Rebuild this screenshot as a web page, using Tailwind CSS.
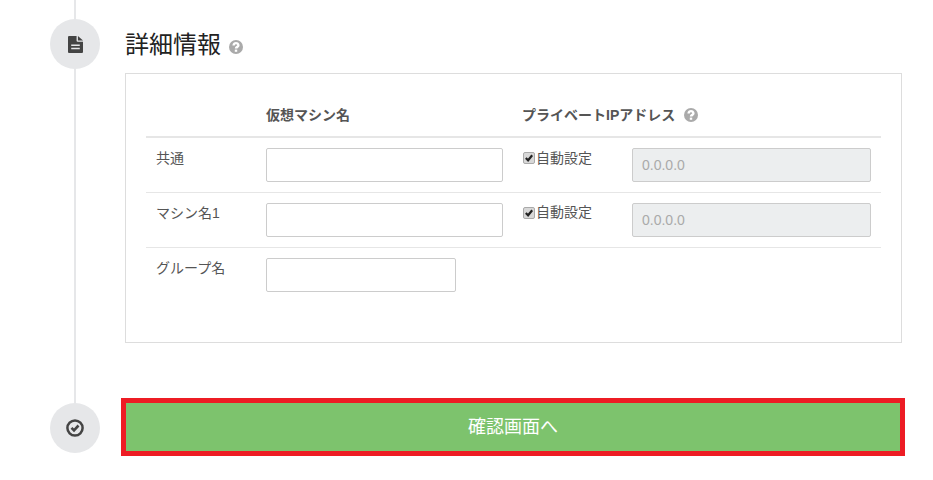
<!DOCTYPE html>
<html lang="ja">
  <head>
    <meta charset="UTF-8" />
    <title>詳細情報</title>
    <script src="https://cdn.jsdelivr.net/npm/@tailwindcss/browser@4"></script>
  </head>
  <body class="bg-white text-[14px] text-[#555] font-['Liberation_Sans','Noto_Sans_CJK_JP',sans-serif] overflow-hidden">
    <div class="relative w-[933px] h-[480px] pl-[50px] pt-[19px]">
      <!-- Timeline line -->
      <div class="absolute left-[74px] top-0 w-[2px] h-[404px] bg-[#e6e7e9]"></div>

      <!-- 詳細情報 -->
      <section class="relative flex">
        <div class="w-[50px] h-[50px] rounded-full bg-[#e6e7e9] flex items-center justify-center shrink-0">
          <svg width="15" height="17" viewBox="0 0 14 16" preserveAspectRatio="none">
            <path fill="#444" d="M0 1a1 1 0 0 1 1-1h7v4.500a1 1 0 0 0 1 1h5V15a1 1 0 0 1-1 1H1a1 1 0 0 1-1-1z" />
            <path fill="#444" d="M9.300 0 14 4.300H9.300z" />
            <path fill="#e6e7e9" d="M3 8h8v1.500H3zM3 11h8v1.500H3z" />
          </svg>
        </div>
        <div class="ml-[25px] w-[777px]">
          <h2 class="h-[54px] pt-[9px] flex items-start gap-[8px] text-[24px] leading-[34px] font-normal text-[#222]">
            詳細情報
            <svg class="mt-[12px]" width="14" height="14" viewBox="0 0 14 14">
              <circle cx="7" cy="7" r="7" fill="#aaa" />
              <path fill="none" stroke="#fff" stroke-width="2.400" d="M4.600 5.400c0-3 4.800-3 4.800 0C9.400 7 7 6.800 7 8.600" />
              <rect x="5.800" y="9.600" width="2.400" height="2.200" fill="#fff" />
            </svg>
          </h2>
          <div class="h-[270px] border border-[#ddd] px-[20px] pt-[20px]">
            <table class="w-[735px] table-fixed border-collapse">
              <thead>
                <tr class="h-[43px] border-b-2 border-[#e6e6e6] text-left font-bold">
                  <th class="w-[110px]"></th>
                  <th class="w-[257px] px-[10px]">仮想マシン名</th>
                  <th class="pl-[9px] pr-[10px]">
                    <span class="flex items-center gap-[9px]">
                      プライベートIPアドレス
                      <svg class="-mt-[1px]" width="14" height="14" viewBox="0 0 14 14">
                        <circle cx="7" cy="7" r="7" fill="#aaa" />
                        <path fill="none" stroke="#fff" stroke-width="2.400" d="M4.600 5.400c0-3 4.800-3 4.800 0C9.400 7 7 6.800 7 8.600" />
                        <rect x="5.800" y="9.600" width="2.400" height="2.200" fill="#fff" />
                      </svg>
                    </span>
                  </th>
                </tr>
              </thead>
              <tbody>
                <tr class="h-[55px] border-b border-[#e6e6e6]">
                  <td class="px-[10px] pt-[10px] align-top leading-[20px]">共通</td>
                  <td class="px-[10px] align-middle"><div class="h-[34px] border border-[#ccc] rounded-[2px]"></div></td>
                  <td class="px-[10px] align-top pt-[10px]">
                    <div class="flex">
                      <label class="w-[109px] flex items-center h-[20px]">
                        <span class="mr-[1px] w-[12px] h-[12px] rounded-[2px] border border-[#aaa] bg-[#d8d8d8] flex items-center justify-center">
                          <svg width="10" height="10" viewBox="0 0 11 11"><path fill="none" stroke="#222" stroke-width="2.400" d="M2 5.500 4.500 8 9 2.500" /></svg>
                        </span>
                        自動設定
                      </label>
                      <div class="w-[239px] h-[34px] border border-[#ccc] rounded-[2px] bg-[#eceeef] px-[9px] leading-[32px] text-[#aaa]">0.0.0.0</div>
                    </div>
                  </td>
                </tr>
                <tr class="h-[55px] border-b border-[#e6e6e6]">
                  <td class="px-[10px] pt-[10px] align-top leading-[20px]">マシン名1</td>
                  <td class="px-[10px] align-middle"><div class="h-[34px] border border-[#ccc] rounded-[2px]"></div></td>
                  <td class="px-[10px] align-top pt-[10px]">
                    <div class="flex">
                      <label class="w-[109px] flex items-center h-[20px]">
                        <span class="mr-[1px] w-[12px] h-[12px] rounded-[2px] border border-[#aaa] bg-[#d8d8d8] flex items-center justify-center">
                          <svg width="10" height="10" viewBox="0 0 11 11"><path fill="none" stroke="#222" stroke-width="2.400" d="M2 5.500 4.500 8 9 2.500" /></svg>
                        </span>
                        自動設定
                      </label>
                      <div class="w-[239px] h-[34px] border border-[#ccc] rounded-[2px] bg-[#eceeef] px-[9px] leading-[32px] text-[#aaa]">0.0.0.0</div>
                    </div>
                  </td>
                </tr>
                <tr class="h-[55px]">
                  <td class="px-[10px] pt-[10px] align-top leading-[20px]">グループ名</td>
                  <td class="px-[10px] align-middle"><div class="w-[190px] h-[34px] border border-[#ccc] rounded-[2px]"></div></td>
                  <td></td>
                </tr>
              </tbody>
            </table>
          </div>
        </div>
      </section>

      <!-- 確認画面へ -->
      <section class="relative flex mt-[60px]">
        <div class="w-[50px] h-[50px] rounded-full bg-[#e6e7e9] flex items-center justify-center shrink-0">
          <svg width="18" height="18" viewBox="0 0 18 18">
            <circle cx="9" cy="9" r="7.600" fill="none" stroke="#444" stroke-width="2.500" />
            <path fill="none" stroke="#444" stroke-width="2.600" d="M5.500 8.800 8 11.300 12.500 6.500" />
          </svg>
        </div>
        <button class="ml-[21px] -mt-[5px] w-[784px] h-[58px] border-[5px] border-[#ed1c24] bg-[#7dc36d] text-white text-[18px]">確認画面へ</button>
      </section>
    </div>
  </body>
</html>
